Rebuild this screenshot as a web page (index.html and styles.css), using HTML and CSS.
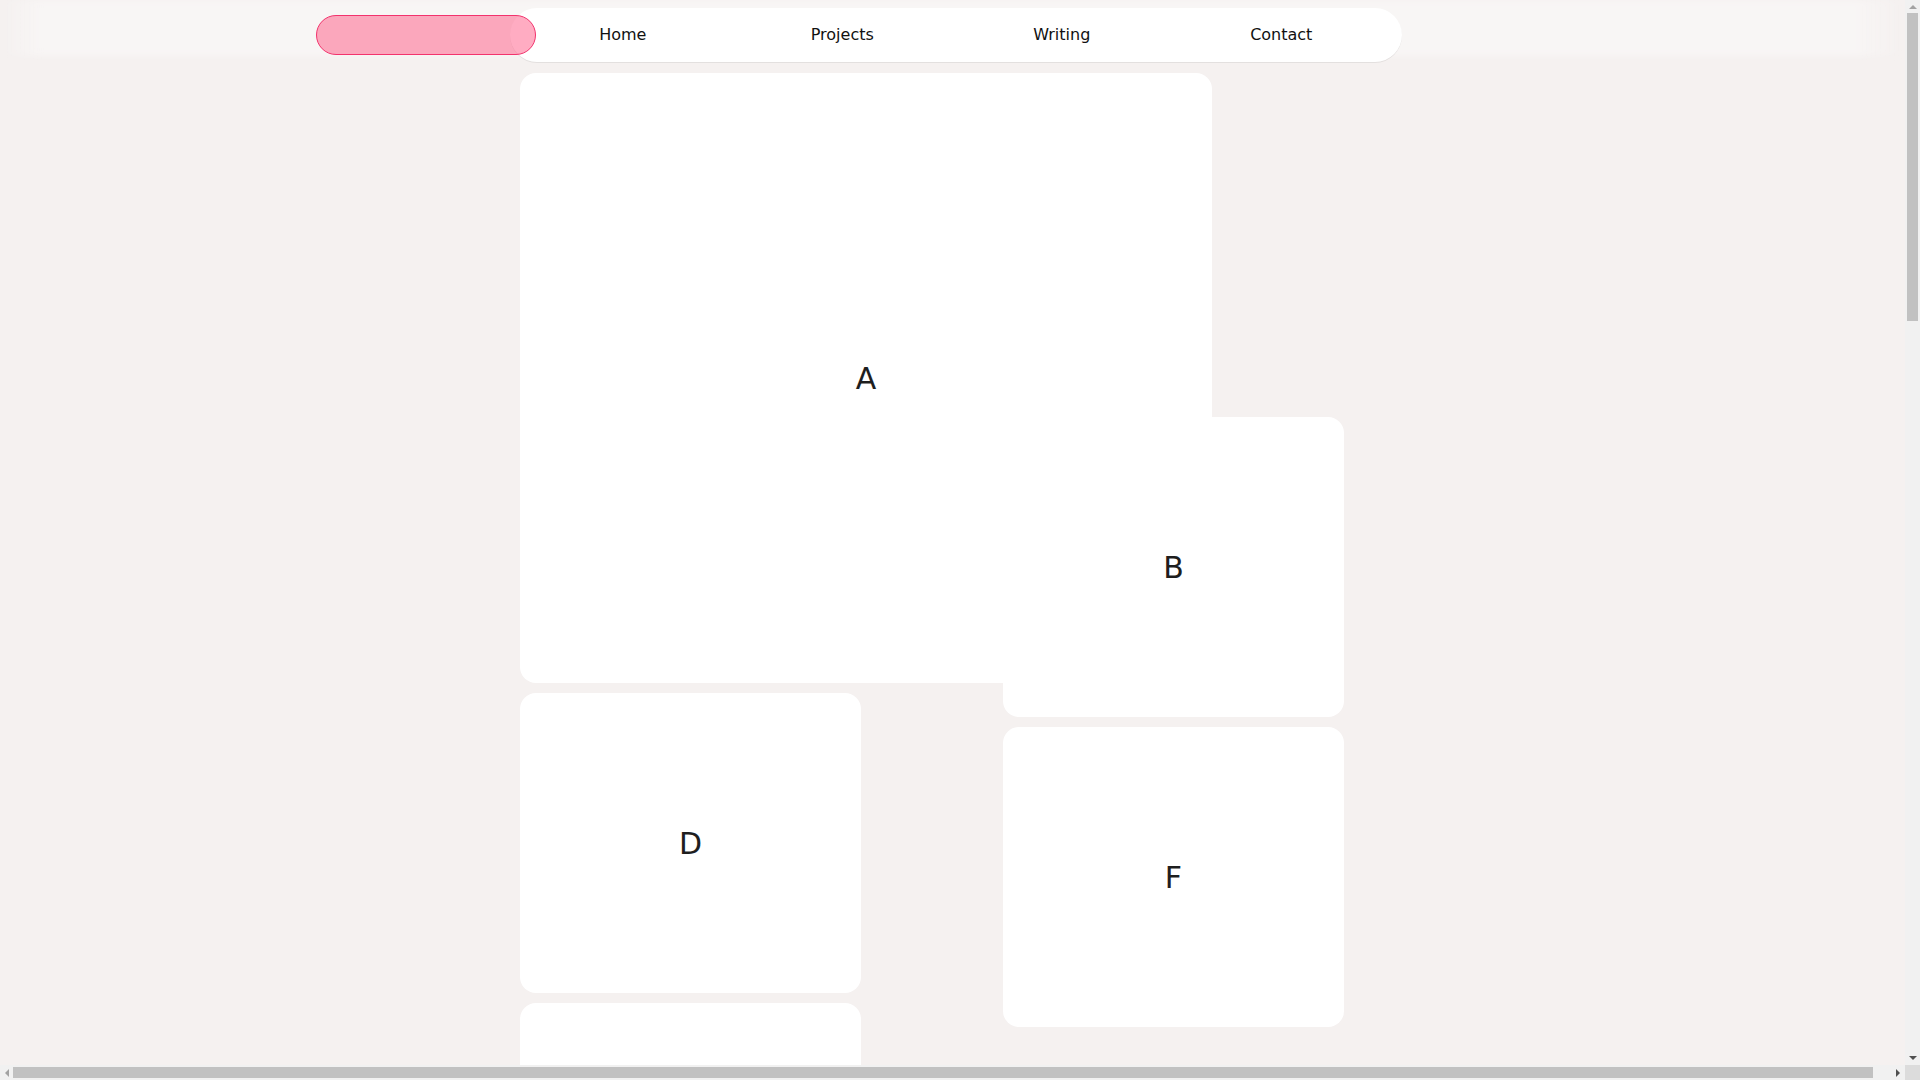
FILE: index.html
```html
<!DOCTYPE html>
<html lang="en">
<head>
<meta charset="utf-8">
<title>Bento</title>
<link rel="stylesheet" href="styles.css">
</head>
<body>
<div class="backdrop"></div>
<header class="topbar">
  <nav class="nav">
    <span class="pill"></span>
    <a class="nav-item" href="#">Home</a>
    <a class="nav-item" href="#">Projects</a>
    <a class="nav-item" href="#">Writing</a>
    <a class="nav-item" href="#">Contact</a>
  </nav>
</header>
<main class="grid">
  <div class="card card-a">A</div>
  <div class="card card-b shifted">B</div>
  <div class="card c1 r3">D</div>
  <div class="card c2 r3 shifted">F</div>
  <div class="card c1 r4"></div>
</main>
<div class="scroll-v">
  <span class="arrow arrow-up"></span>
  <span class="thumb-v"></span>
  <span class="arrow arrow-down"></span>
</div>
<div class="scroll-h">
  <span class="arrow arrow-left"></span>
  <span class="thumb-h"></span>
  <span class="arrow arrow-right"></span>
</div>
<div class="scroll-corner"></div>
</body>
</html>
```
FILE: styles.css
```css
html, body {
  margin: 0;
  padding: 0;
}
body {
  background: #f5f1f0;
  font-family: "DejaVu Sans", "Liberation Sans", sans-serif;
  color: #111;
  height: 100vh;
  overflow: hidden;
  position: relative;
}
.backdrop {
  position: absolute;
  top: 0;
  left: 0;
  width: 1905px;
  height: 56px;
  background: linear-gradient(90deg, rgba(255,255,255,0) 0, rgba(255,255,255,0.35) 40px, rgba(255,255,255,0.35) calc(100% - 50px), rgba(255,255,255,0) 100%);
  filter: blur(3px);
}
.topbar {
  position: relative;
  padding-top: 8px;
  padding-left: 510px;
}
.nav {
  position: relative;
  display: flex;
  width: 892px;
  box-sizing: border-box;
  height: 54px;
  padding: 0 11px 1px 3px;
  align-items: center;
  background: #fff;
  border-radius: 27px;
  box-shadow: 0 1px 0 rgba(0,0,0,0.07);
}
.nav-item {
  flex: 1;
  text-align: center;
  font-size: 16px;
  color: #111;
  text-decoration: none;
}
.pill {
  position: absolute;
  left: -194px;
  top: 7px;
  width: 220px;
  height: 40px;
  box-sizing: border-box;
  border: 1px solid #f2336d;
  border-radius: 20px;
  background: rgba(255, 70, 120, 0.45);
  z-index: 2;
}
.grid {
  display: grid;
  grid-template-columns: 341px 341px;
  grid-auto-rows: 300px;
  gap: 10px;
  margin-left: 520px;
  margin-top: 11px;
  width: 692px;
}
.card {
  background: #fff;
  border-radius: 16px;
  display: flex;
  align-items: center;
  justify-content: center;
  font-size: 30px;
  color: #1e1e1e;
}
.card-a { grid-column: 1 / 3; grid-row: 1 / 3; }
.card-b { grid-column: 2; grid-row: 2; }
.shifted { transform: translate(132px, 34px); }
.c1 { grid-column: 1; }
.c2 { grid-column: 2; }
.r3 { grid-row: 3; }
.r4 { grid-row: 4; }

/* scrollbars */
.scroll-v {
  position: fixed;
  top: 0;
  right: 0;
  width: 15px;
  height: 1065px;
  background: #f1f1f1;
  display: flex;
  flex-direction: column;
  align-items: center;
}
.scroll-h {
  position: fixed;
  left: 0;
  bottom: 0;
  width: 1905px;
  height: 15px;
  background: #f1f1f1;
  display: flex;
  align-items: center;
}
.scroll-corner {
  position: fixed;
  right: 0;
  bottom: 0;
  width: 15px;
  height: 15px;
  background: #dcdcdc;
}
.thumb-v {
  width: 11px;
  height: 308px;
  margin-top: 4px;
  background: #c1c1c1;
}
.thumb-h {
  height: 11px;
  width: 1860px;
  margin-left: 4px;
  background: #c1c1c1;
}
.arrow {
  width: 0;
  height: 0;
  border-style: solid;
  border-color: transparent;
}
.arrow-up {
  margin-top: 5px;
  border-width: 0 4px 4px 4px;
  border-bottom-color: #a3a3a3;
}
.arrow-down {
  margin-top: auto;
  margin-bottom: 5px;
  border-width: 4px 4px 0 4px;
  border-top-color: #505050;
}
.arrow-left {
  margin-left: 5px;
  border-width: 4px 4px 4px 0;
  border-right-color: #a3a3a3;
}
.arrow-right {
  margin-left: auto;
  margin-right: 5px;
  border-width: 4px 0 4px 4px;
  border-left-color: #505050;
}
```
